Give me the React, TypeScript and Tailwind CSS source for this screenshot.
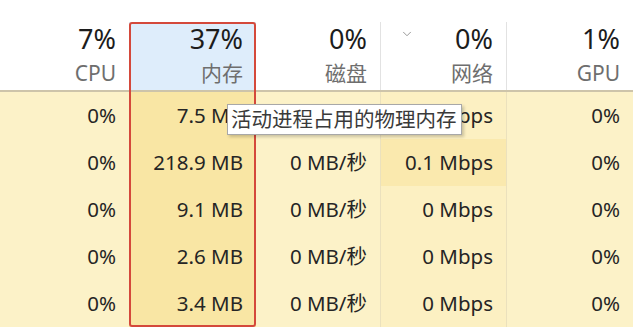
import { ChevronDown } from "lucide-react";

const FONT = "font-['Noto_Sans','Noto_Sans_CJK_SC',sans-serif]";

type Col = { pct: string; label: string; width: string; head: string; cell: string; cells: string[] };

const COLS: Col[] = [
  { pct: "7%", label: "CPU", width: "w-[129px]", head: "bg-white", cell: "bg-[#fcf2c8]", cells: ["0%", "0%", "0%", "0%", "0%"] },
  {
    pct: "37%",
    label: "内存",
    width: "w-[127px]",
    head: "bg-[#deedfb]",
    cell: "bg-[#f9e6a4]",
    cells: ["7.5 MB", "218.9 MB", "9.1 MB", "2.6 MB", "3.4 MB"],
  },
  {
    pct: "0%",
    label: "磁盘",
    width: "w-[124px]",
    head: "bg-white",
    cell: "bg-[#fcf2c8]",
    cells: ["0 MB/秒", "0 MB/秒", "0 MB/秒", "0 MB/秒", "0 MB/秒"],
  },
  {
    pct: "0%",
    label: "网络",
    width: "w-[126px]",
    head: "bg-white",
    cell: "bg-[#fcf0c2]",
    cells: ["0 Mbps", "0.1 Mbps", "0 Mbps", "0 Mbps", "0 Mbps"],
  },
  { pct: "1%", label: "GPU", width: "w-[127px]", head: "bg-white", cell: "bg-[#fcf2c8]", cells: ["0%", "0%", "0%", "0%", "0%"] },
];

export default function App() {
  return (
    <div className={`${FONT} relative h-[329px] w-[633px] overflow-hidden bg-white`}>
      <div className="h-[22px]" />

      {/* header */}
      <div className="flex h-[70px] border-b-2 border-[#cdc4aa]">
        {COLS.map((c, i) => (
          <div
            key={c.label}
            className={`relative flex flex-col items-end pr-[13px] ${c.width} ${c.head} ${
              i >= 3 ? "border-l border-[#e2e2e2]" : ""
            }`}
          >
            {c.label === "网络" && (
              <ChevronDown className="absolute left-[19px] top-[5px] h-[14px] w-[14px] text-[#8a8a8a]" strokeWidth={1.5} />
            )}
            <span className="text-[27px] leading-[34px] text-[#1c1c1c]">{c.pct}</span>
            <span className="pt-[2px] text-[21px] leading-[30px] text-[#6e6e6e]">{c.label}</span>
          </div>
        ))}
      </div>

      {/* rows */}
      <div className="flex">
        {COLS.map((c, i) => (
          <div
            key={c.label}
            className={`flex flex-col ${c.width} ${c.cell} ${i >= 3 ? "border-l border-[#ebe1bd]" : ""}`}
          >
            {c.cells.map((v, r) => (
              <div
                key={r}
                className={`flex h-[47px] items-center justify-end pr-[13px] text-[20.5px] text-[#252525] ${
                  i === 3 && r === 1 ? "bg-[#fae9ae]" : ""
                }`}
              >
                {v}
              </div>
            ))}
          </div>
        ))}
      </div>

      {/* highlight box around memory column */}
      <div className="absolute left-[129px] top-[22px] h-[305px] w-[127px] rounded-[3px] border-2 border-[#d4493b]" />

      {/* tooltip */}
      <div className="absolute left-[227px] top-[104px] flex h-[31px] items-center border border-[#a8a8a8] bg-white pl-[3px] pr-[4px] text-[20.5px] leading-none text-[#3a3a3a] shadow-[2px_2px_3px_rgba(0,0,0,0.2)]">
        活动进程占用的物理内存
      </div>
    </div>
  );
}
